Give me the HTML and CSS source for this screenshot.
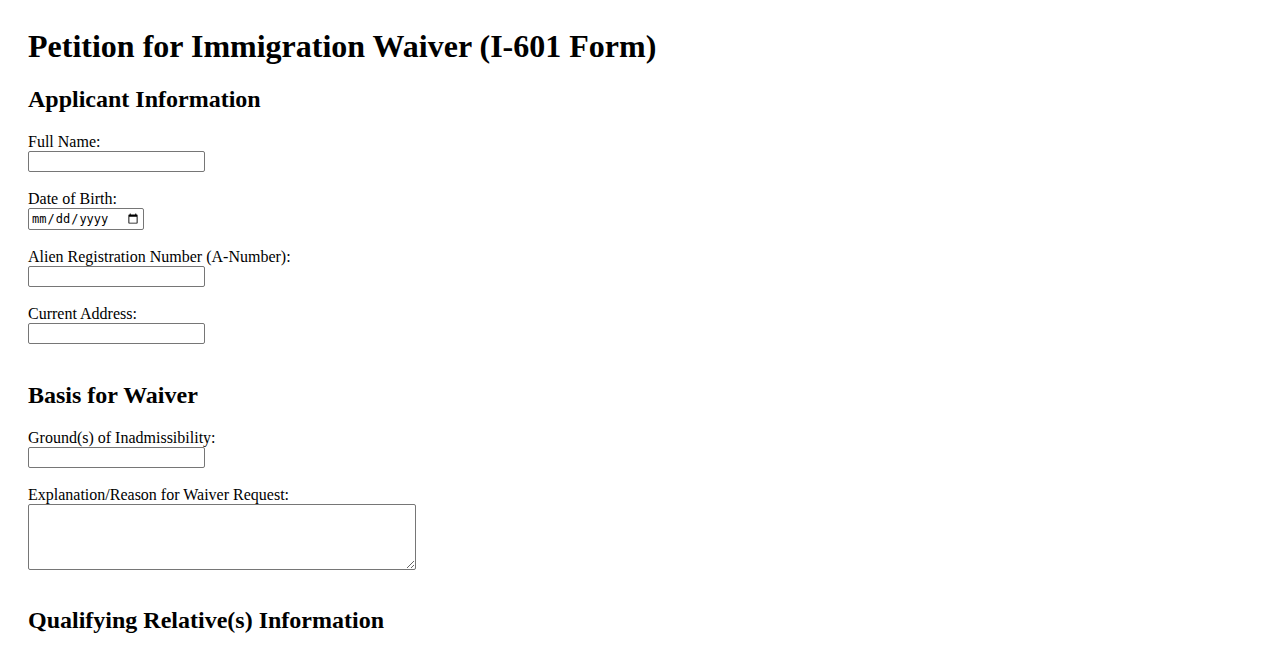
FILE: index.html
```html
<!DOCTYPE html>
<html lang="en">
<head>
<meta charset="utf-8">
<title>Petition for Immigration Waiver (I-601 Form)</title>
<link rel="stylesheet" href="styles.css">
</head>
<body>
<div class="page">
  <h1 class="title">Petition for Immigration Waiver (I-601 Form)</h1>
  <form class="form">
    <section class="section">
      <h2 class="section-title">Applicant Information</h2>
      <div class="field">
        <label class="label" for="fullName">Full Name:</label>
        <input class="input" type="text" id="fullName">
      </div>
      <div class="field">
        <label class="label" for="dob">Date of Birth:</label>
        <input class="input input-date" type="date" id="dob">
      </div>
      <div class="field">
        <label class="label" for="anum">Alien Registration Number (A-Number):</label>
        <input class="input" type="text" id="anum">
      </div>
      <div class="field">
        <label class="label" for="addr">Current Address:</label>
        <input class="input" type="text" id="addr">
      </div>
    </section>
    <section class="section">
      <h2 class="section-title">Basis for Waiver</h2>
      <div class="field">
        <label class="label" for="grounds">Ground(s) of Inadmissibility:</label>
        <input class="input" type="text" id="grounds">
      </div>
      <div class="field">
        <label class="label" for="reason">Explanation/Reason for Waiver Request:</label>
        <textarea class="textarea" id="reason"></textarea>
      </div>
    </section>
    <section class="section">
      <h2 class="section-title">Qualifying Relative(s) Information</h2>
    </section>
  </form>
</div>
</body>
</html>
```
FILE: styles.css
```css
html, body {
  margin: 0;
  padding: 0;
  background: #ffffff;
}
body {
  font-family: "Liberation Serif", "Times New Roman", serif;
  font-size: 16px;
  color: #000000;
}
.page {
  padding: 28px;
}
.title {
  font-size: 32px;
  font-weight: bold;
  line-height: 37px;
  margin: 0 0 21.44px 0;
}
.form {
  margin: 0;
}
.section {
  display: flow-root;
}
.section-title {
  font-size: 24px;
  font-weight: bold;
  line-height: 27.6px;
  margin: 19.92px 0 19px 0;
}
.title + .form .section:first-child .section-title {
  margin-top: 0;
}
.field {
  margin-bottom: 18px;
}
.label {
  display: block;
  line-height: 18px;
}
.input {
  display: block;
  box-sizing: border-box;
  width: 177px;
  height: 21px;
  margin: 0;
  padding: 1px 2px;
  border: 1px solid #767676;
  border-radius: 2px;
  background: #ffffff;
  font-family: "Liberation Sans", Arial, sans-serif;
  font-size: 13.33px;
}
.input-date {
  width: 116px;
  height: 22px;
  font-family: "DejaVu Sans Mono", "Liberation Mono", monospace;
  font-size: 12px;
  color: #000000;
}
.textarea {
  display: block;
  box-sizing: border-box;
  width: 388px;
  height: 66px;
  margin: 0;
  padding: 2px;
  border: 1px solid #767676;
  border-radius: 2px;
  background: #ffffff;
  font-family: "Liberation Mono", monospace;
  font-size: 13.33px;
  resize: both;
}
```
